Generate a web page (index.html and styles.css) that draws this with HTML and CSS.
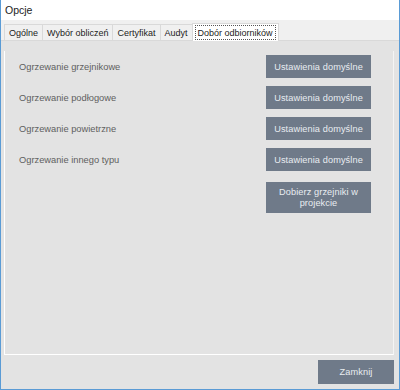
FILE: index.html
```html
<!DOCTYPE html>
<html lang="pl">
<head>
  <meta charset="UTF-8">
  <title>Opcje</title>
  <link rel="stylesheet" href="styles.css">
</head>
<body>

<div class="okno">
  <div class="tytul">Opcje</div>

  <div class="zakladki">
    <div class="zakladka">Ogólne</div>
    <div class="zakladka">Wybór obliczeń</div>
    <div class="zakladka">Certyfikat</div>
    <div class="zakladka">Audyt</div>
    <div class="zakladka aktywna"><span>Dobór odbiorników</span></div>
  </div>

  <section class="panel">
    <div class="wiersz">
      <span class="etykieta">Ogrzewanie grzejnikowe</span>
      <button class="przycisk">Ustawienia domyślne</button>
    </div>
    <div class="wiersz">
      <span class="etykieta">Ogrzewanie podłogowe</span>
      <button class="przycisk">Ustawienia domyślne</button>
    </div>
    <div class="wiersz">
      <span class="etykieta">Ogrzewanie powietrzne</span>
      <button class="przycisk">Ustawienia domyślne</button>
    </div>
    <div class="wiersz">
      <span class="etykieta">Ogrzewanie innego typu</span>
      <button class="przycisk">Ustawienia domyślne</button>
    </div>
    <div class="wiersz">
      <span class="etykieta"></span>
      <button class="przycisk wysoki">Dobierz grzejniki w projekcie</button>
    </div>
  </section>

  <footer class="stopka">
    <button class="przycisk zamknij">Zamknij</button>
  </footer>
</div>

</body>
</html>
```

FILE: styles.css
```css
body {
  margin: 0;
  padding: 0;
  font-family: "Liberation Sans", Arial, sans-serif;
  background: #fff;
}

.okno {
  width: 400px;
  height: 390px;
  box-sizing: border-box;
  border: 1px solid #5a9bd5;
  border-top: none;
  display: flex;
  flex-direction: column;
  background: #e3e3e3;
}

.tytul {
  height: 20px;
  line-height: 21px;
  padding-left: 4px;
  background: #fff;
  font-size: 10.5px;
  color: #222;
}

.zakladki {
  display: flex;
  align-items: flex-end;
  height: 20px;
  padding-left: 3px;
  background: #f0f0f0;
  border-bottom: 1px solid #d9d9d9;
}

.zakladka {
  height: 15px;
  line-height: 16px;
  padding: 0 4px;
  font-size: 9px;
  color: #222;
  background: #f0f0f0;
  border: 1px solid #d9d9d9;
  border-bottom: none;
  margin-right: -1px;
}

.zakladka.aktywna {
  height: 17px;
  padding: 0 2px;
  background: #fff;
  position: relative;
  top: 1px;
}

.zakladka.aktywna span {
  display: block;
  height: 13px;
  line-height: 14px;
  padding: 0 2px;
  margin-top: 1px;
  border: 1px dotted #555;
}

.panel {
  flex: 1;
  margin: 10px 5px 0 3px;
  padding: 4px 0 0 14px;
  border-left: 1px solid #fff;
  border-bottom: 1px solid #fff;
  border-right: 1px solid #f4f4f4;
  display: flex;
  flex-direction: column;
  gap: 8px;
}

.wiersz {
  display: flex;
  align-items: center;
  justify-content: space-between;
  padding-right: 22px;
}

.etykieta {
  font-size: 9.3px;
  color: #606060;
}

.przycisk {
  width: 105px;
  height: 23px;
  padding: 0;
  border: none;
  background: #6f7a89;
  color: #e9edf1;
  font-family: "Liberation Sans", Arial, sans-serif;
  font-size: 9.2px;
  letter-spacing: 0.1px;
}

.przycisk.wysoki {
  height: 31px;
  line-height: 11px;
  margin-top: 3px;
  padding: 0 8px;
}

.stopka {
  height: 34px;
  display: flex;
  align-items: center;
  justify-content: flex-end;
  padding-right: 5px;
}

.przycisk.zamknij {
  width: 76px;
  height: 24px;
}
```
